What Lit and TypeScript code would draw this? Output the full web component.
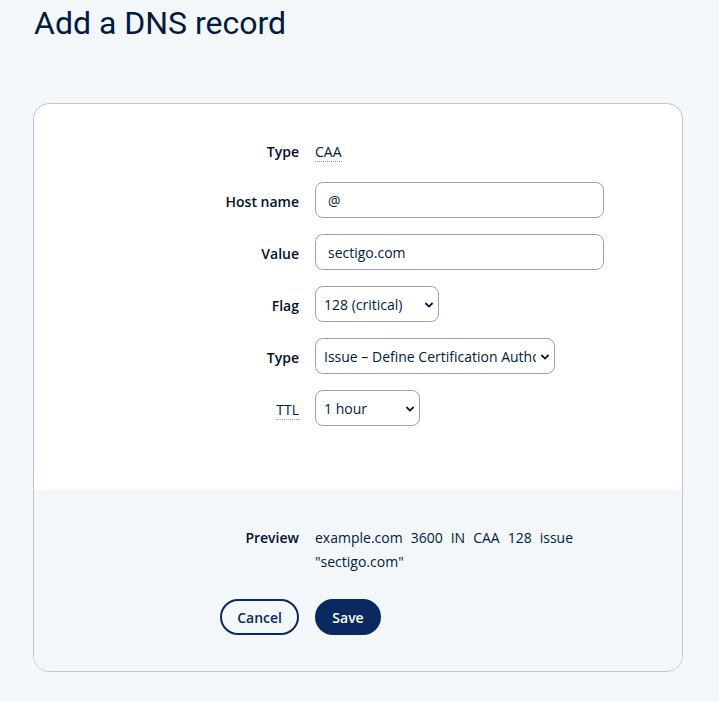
import { LitElement, html, css } from "lit";
import { customElement, state } from "lit/decorators.js";

const chevron = html`<svg class="chevron" viewBox="0 0 10 6" width="10" height="6" aria-hidden="true">
  <path d="M1.4 1 L5 4.6 L8.6 1" fill="none" stroke="currentColor" stroke-width="1.8" />
</svg>`;

@customElement("app-root")
export class AppRoot extends LitElement {
  @state() private host = "@";
  @state() private value = "sectigo.com";
  @state() private flag = "128";
  @state() private tag = "issue";
  @state() private ttl = "3600";

  static styles = css`
    :host {
      display: block;
      box-sizing: border-box;
      min-height: 100vh;
      padding: 0 36px 29px 33px;
      background: #f3f7fa;
      color: #001b41;
      font: 14px/24px "Open Sans", sans-serif;
    }
    h1 {
      margin: 0;
      padding: 3px 0 0 1px;
      font: 400 32px/40px Roboto, sans-serif;
    }
    .card {
      margin-top: 60px;
      border: 1px solid #bcc6d4;
      border-radius: 16px;
      overflow: hidden;
      background: #fff;
    }
    .row {
      display: grid;
      grid-template-columns: minmax(0, 265px) minmax(0, 1fr);
      column-gap: 16px;
      padding-right: 78px;
    }
    .fields {
      display: grid;
      row-gap: 16px;
      padding: 28px 0 64px;
    }
    .label {
      padding-top: 8px;
      text-align: right;
      font-weight: 600;
      color: #00112e;
    }
    .static {
      padding: 8px 0 2px;
    }
    abbr {
      display: inline-block;
      font-weight: 400;
      line-height: 19px;
      color: #001b41;
      text-decoration: none;
      border-bottom: 1px dotted #8593ab;
      cursor: help;
    }
    input,
    select {
      box-sizing: border-box;
      width: 100%;
      height: 36px;
      margin: 0;
      border: 1px solid #97a3b6;
      border-radius: 8px;
      background-color: #fff;
      color: #001b41;
      font: inherit;
    }
    input {
      padding: 0 12px;
    }
    .picker {
      position: relative;
      max-width: 100%;
    }
    select {
      appearance: none;
      display: block;
      padding: 2px 18px 0 8px;
    }
    .chevron {
      position: absolute;
      right: 5px;
      top: 16px;
      pointer-events: none;
    }
    .flag {
      width: 124px;
    }
    .tag {
      width: 240px;
    }
    .ttl {
      width: 105px;
    }
    .footer {
      display: grid;
      row-gap: 25px;
      padding: 28px 0 36px;
      background: #f3f7fa;
    }
    .preview {
      display: flex;
      flex-wrap: wrap;
      column-gap: 8px;
      padding-top: 8px;
    }
    .cancel-cell {
      text-align: right;
    }
    button {
      box-sizing: border-box;
      height: 36px;
      min-width: 66px;
      padding: 1px 15px 0;
      border: 2px solid #0b2961;
      border-radius: 18px;
      background: transparent;
      color: #0b2961;
      font: inherit;
      font-weight: 600;
      cursor: pointer;
    }
    .save {
      background: #0b2961;
      color: #fff;
    }
  `;

  render() {
    const name = this.host === "@" ? "example.com" : `${this.host}.example.com`;
    const parts = [name, this.ttl, "IN", "CAA", this.flag, this.tag, `"${this.value}"`];
    return html`
      <h1>Add a DNS record</h1>
      <form class="card" @submit=${(e: Event) => e.preventDefault()}>
        <div class="fields">
          <div class="row">
            <span class="label">Type</span>
            <div class="static"><abbr title="Certification Authority Authorization">CAA</abbr></div>
          </div>
          <div class="row">
            <label class="label" for="host">Host name</label>
            <input id="host" type="text" .value=${this.host}
              @input=${(e: Event) => (this.host = (e.target as HTMLInputElement).value)} />
          </div>
          <div class="row">
            <label class="label" for="value">Value</label>
            <input id="value" type="text" .value=${this.value}
              @input=${(e: Event) => (this.value = (e.target as HTMLInputElement).value)} />
          </div>
          <div class="row">
            <label class="label" for="flag">Flag</label>
            <div class="picker flag">
              <select id="flag"
                @change=${(e: Event) => (this.flag = (e.target as HTMLSelectElement).value)}>
                <option value="128" selected>128 (critical)</option>
                <option value="0">0</option>
              </select>
              ${chevron}
            </div>
          </div>
          <div class="row">
            <label class="label" for="tag">Type</label>
            <div class="picker tag">
              <select id="tag"
                @change=${(e: Event) => (this.tag = (e.target as HTMLSelectElement).value)}>
                <option value="issue" selected>Issue – Define Certification Authority</option>
              </select>
              ${chevron}
            </div>
          </div>
          <div class="row">
            <label class="label" for="ttl"><abbr title="Time to live">TTL</abbr></label>
            <div class="picker ttl">
              <select id="ttl"
                @change=${(e: Event) => (this.ttl = (e.target as HTMLSelectElement).value)}>
                <option value="3600" selected>1 hour</option>
              </select>
              ${chevron}
            </div>
          </div>
        </div>
        <div class="footer">
          <div class="row">
            <span class="label">Preview</span>
            <div class="preview">${parts.map((part) => html`<span>${part}</span>`)}</div>
          </div>
          <div class="row">
            <div class="cancel-cell"><button type="button">Cancel</button></div>
            <div><button type="submit" class="save">Save</button></div>
          </div>
        </div>
      </form>
    `;
  }
}
